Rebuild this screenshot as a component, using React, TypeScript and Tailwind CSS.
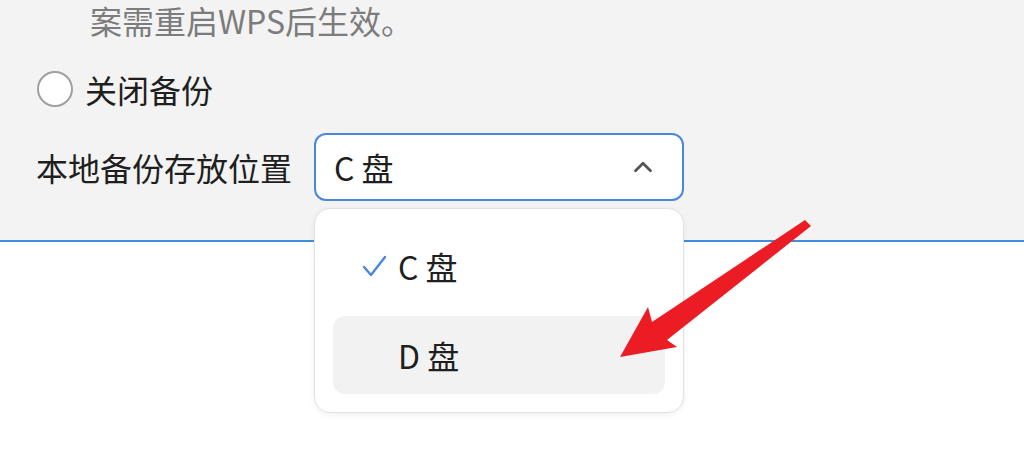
import { ChevronUp } from "lucide-react";

export default function App() {
  return (
    <div className="relative w-[1024px] h-[449px] overflow-hidden bg-white font-['Noto_Sans_CJK_SC',sans-serif] text-[#1f1f1f]">
      {/* Settings panel */}
      <div className="h-[242px] bg-[#f3f3f3] border-b-2 border-[#3d8fdb] pl-[36px]">
        <p className="pl-[54px] h-[42px] leading-[40px] text-[32px] text-[#7c7c7c]">
          案需重启WPS后生效。
        </p>

        <div className="mt-[27px] h-[40px] flex items-center">
          <span className="ml-[1px] w-[36px] h-[36px] rounded-full border-2 border-[#a0a0a0] bg-white" />
          <span className="ml-[12px] text-[32px] leading-[40px]">关闭备份</span>
        </div>

        <div className="mt-[24px] flex items-center">
          <span className="w-[278px] text-[32px] leading-[40px]">本地备份存放位置</span>
          <div className="w-[370px] h-[68px] flex items-center justify-between rounded-[12px] border-2 border-[#4a86e0] bg-white pl-[18px] pr-[24px]">
            <span className="text-[32px] leading-[40px]">C 盘</span>
            <ChevronUp className="w-[30px] h-[30px] text-[#555]" strokeWidth={2.2} />
          </div>
        </div>
      </div>

      {/* Dropdown menu */}
      <div className="absolute left-[314px] top-[208px] w-[370px] h-[205px] rounded-[16px] border border-[#e2e2e2] bg-white shadow-[0_2px_6px_rgba(0,0,0,0.06)] p-[18px] flex flex-col gap-[10px]">
        <div className="h-[79px] flex items-center pl-[29px] rounded-[12px]">
          <span className="w-[36px] flex items-center">
            <svg width="25" height="24" viewBox="0 0 25 24" fill="none">
              <path d="M2 13 L9 21 L23 3" stroke="#4a86e0" strokeWidth="2.4" strokeLinecap="round" strokeLinejoin="round" />
            </svg>
          </span>
          <span className="text-[32px] leading-[40px]">C 盘</span>
        </div>
        <div className="h-[79px] flex items-center pl-[65px] rounded-[12px] bg-[#f2f2f2]">
          <span className="text-[32px] leading-[40px]">D 盘</span>
        </div>
      </div>

      {/* Annotation arrow */}
      <svg className="absolute left-0 top-0 pointer-events-none" width="1024" height="449" viewBox="0 0 1024 449">
        <polygon
          points="805,220 811,226 667,340 677,347 620,357 648,307 652,322"
          fill="#ec1c24"
        />
      </svg>
    </div>
  );
}
